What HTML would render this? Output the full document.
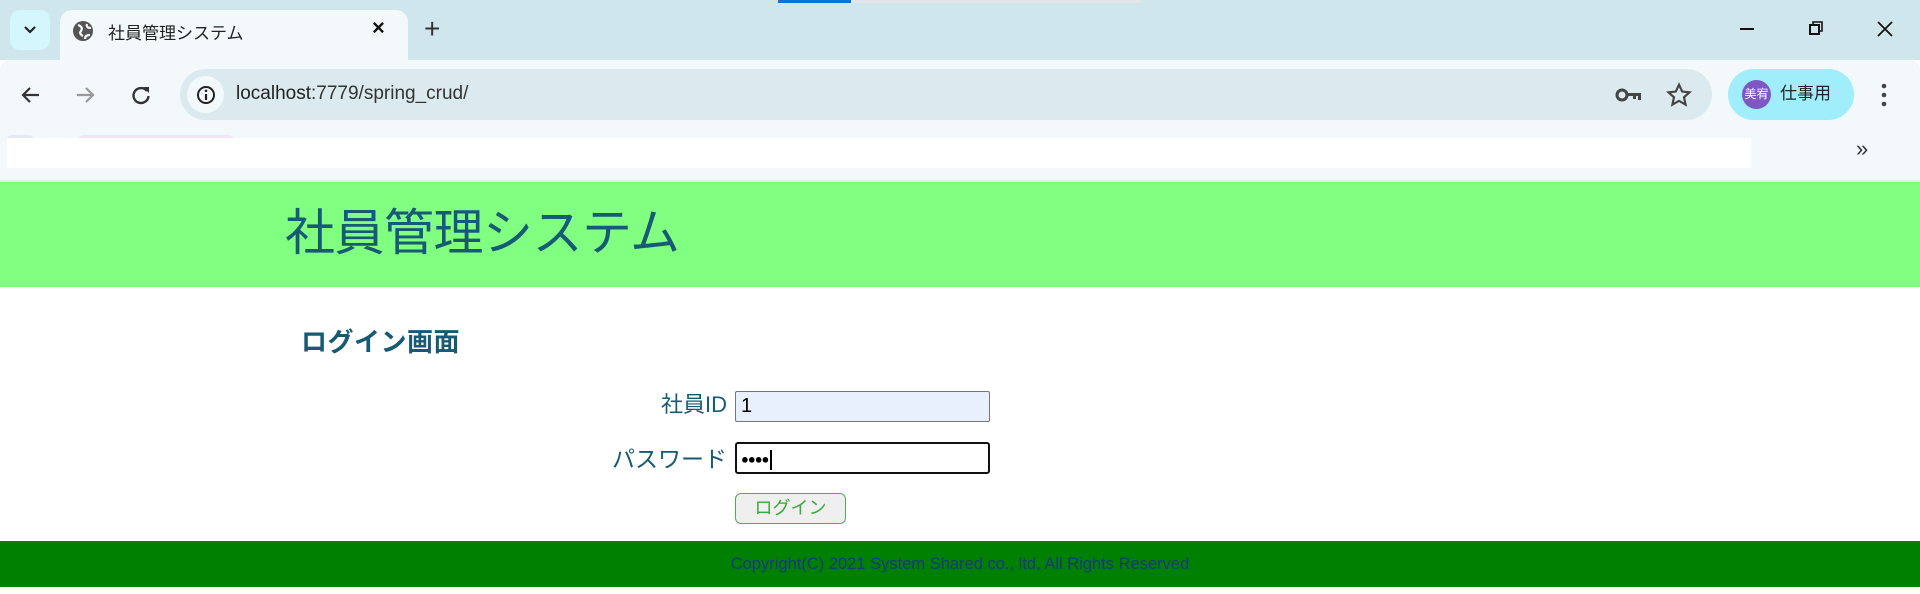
<!DOCTYPE html>
<html><head><meta charset="utf-8"><style>
*{margin:0;padding:0;box-sizing:border-box}
body{width:1920px;height:594px;overflow:hidden;background:#fff;font-family:"Liberation Sans","Noto Sans CJK JP",sans-serif;position:relative}
.abs{position:absolute}
</style></head><body>
<div class="abs" style="left:0;top:0;width:1920px;height:60px;background:#cfe7ec"></div>
<div class="abs" style="left:778px;top:0;width:73px;height:3px;background:#0b73d8"></div>
<div class="abs" style="left:851px;top:0;width:290px;height:3px;background:#e2e6ea"></div>
<div class="abs" style="left:10px;top:10px;width:40px;height:40px;border-radius:10px;background:#d4f6fd"></div>
<svg class="abs" style="left:23px;top:24px" width="14" height="12"><path d="M2 3l5 5 5-5" stroke="#222" stroke-width="2.2" fill="none"/></svg>
<div class="abs" style="left:60px;top:10px;width:348px;height:52px;background:#f3f8fb;border-radius:12px 12px 0 0"></div>
<svg class="abs" style="left:72px;top:20px" width="22" height="22" viewBox="0 0 22 22"><circle cx="11" cy="11" r="10" fill="#555"/><path d="M6 5c3 1 5 3 3 6-2 2 0 4 2 5M15 4c-1 3 1 4 4 4M13 19c0-3 2-4 5-4" stroke="#f3f8fb" stroke-width="2.2" fill="none"/></svg>
<div class="abs" style="left:108px;top:19px;font-size:17px;color:#222">社員管理システム</div>
<div class="abs" style="left:372px;top:15px;font-size:22px;color:#111;font-weight:bold">×</div>
<div class="abs" style="left:424px;top:13px;font-size:28px;color:#333">+</div>
<div class="abs" style="left:1740px;top:28px;width:14px;height:2px;background:#111"></div>
<svg class="abs" style="left:1808px;top:20px" width="16" height="16"><rect x="2" y="5" width="9" height="9" fill="none" stroke="#111" stroke-width="2"/><path d="M5 5V2h9v9h-3" fill="none" stroke="#111" stroke-width="1.6"/></svg>
<svg class="abs" style="left:1876px;top:20px" width="18" height="18"><path d="M2 2l14 14M16 2L2 16" stroke="#111" stroke-width="1.8"/></svg>

<div class="abs" style="left:0;top:60px;width:1920px;height:122px;background:#f3f8fb;border-radius:10px 10px 0 0"></div>
<svg class="abs" style="left:20px;top:84px" width="22" height="22"><path d="M19 11H4M10 4l-7 7 7 7" stroke="#333" stroke-width="2.2" fill="none"/></svg>
<svg class="abs" style="left:74px;top:84px" width="22" height="22"><path d="M3 11h15M12 4l7 7-7 7" stroke="#999" stroke-width="2.2" fill="none"/></svg>
<svg class="abs" style="left:130px;top:84px" width="22" height="22"><path d="M17 7A7.5 7.5 0 1 0 18.5 12" stroke="#333" stroke-width="2.4" fill="none"/><path d="M13 3h6v6z" fill="#333"/></svg>
<div class="abs" style="left:180px;top:69px;width:1532px;height:51px;border-radius:26px;background:#dbeaee"></div>
<div class="abs" style="left:187px;top:76px;width:37px;height:37px;border-radius:50%;background:#f3f8fb"></div>
<svg class="abs" style="left:195px;top:84px" width="22" height="22"><circle cx="11" cy="11" r="8" fill="none" stroke="#222" stroke-width="2"/><path d="M11 10v6" stroke="#222" stroke-width="2.2"/><circle cx="11" cy="6.8" r="1.3" fill="#222"/></svg>
<div class="abs" style="left:236px;top:83px;font-size:19px;color:#222">localhost<span style="color:#333">:7779/spring_crud/</span></div>
<svg class="abs" style="left:1615px;top:85px" width="28" height="20"><circle cx="7" cy="10" r="5" fill="none" stroke="#444" stroke-width="3"/><path d="M12 8h14v7h-3v-4h-2v3h-3v-3h-6z" fill="#444"/></svg>
<svg class="abs" style="left:1666px;top:82px" width="26" height="26" viewBox="0 0 24 24"><path d="M12 2.5l2.9 6.3 6.8.7-5.1 4.6 1.5 6.8L12 17.4l-6.1 3.5 1.5-6.8-5.1-4.6 6.8-.7z" fill="none" stroke="#444" stroke-width="2"/></svg>
<div class="abs" style="left:1728px;top:69px;width:126px;height:51px;border-radius:26px;background:#a0edfc"></div>
<div class="abs" style="left:1742px;top:80px;width:29px;height:29px;border-radius:50%;background:#7e57c2;color:#fff;font-size:12px;line-height:29px;text-align:center">美宥</div>
<div class="abs" style="left:1780px;top:82px;font-size:17px;line-height:24px;color:#222">仕事用</div>
<svg class="abs" style="left:1880px;top:82px" width="8" height="26"><circle cx="4" cy="4" r="2.3" fill="#444"/><circle cx="4" cy="13" r="2.3" fill="#444"/><circle cx="4" cy="22" r="2.3" fill="#444"/></svg>
<div class="abs" style="left:7px;top:135px;width:27px;height:5px;border-radius:6px 6px 0 0;background:#e4e8f7"></div>
<div class="abs" style="left:78px;top:135px;width:156px;height:5px;border-radius:6px 6px 0 0;background:#f1e4f8"></div>
<div class="abs" style="left:7px;top:138px;width:1744px;height:30px;background:#fff"></div>
<div class="abs" style="left:1856px;top:136px;font-size:22px;color:#333">»</div>
<div class="abs" style="left:0;top:180px;width:1920px;height:2px;background:#e6eef0"></div>

<div class="abs" style="left:0;top:182px;width:1920px;height:105px;background:#80ff80"></div>
<div class="abs" style="left:285px;top:201px;font-size:50px;color:#165a74;line-height:64px;letter-spacing:-0.5px">社員管理システム</div>
<div class="abs" style="left:301px;top:322px;font-size:26px;font-weight:bold;color:#165a74;letter-spacing:0.5px">ログイン画面</div>
<div class="abs" style="left:500px;top:387px;width:227px;text-align:right;font-size:22px;color:#165a74">社員ID</div>
<div class="abs" style="left:735px;top:391px;width:255px;height:31px;background:#e8f0fe;border:1px solid #767676;border-radius:2px;font-size:20px;padding:3px 5px;color:#000">1</div>
<div class="abs" style="left:500px;top:440px;width:227px;text-align:right;font-size:23px;color:#165a74">パスワード</div>
<div class="abs" style="left:735px;top:442px;width:255px;height:32px;border:2px solid #111;border-radius:3px;font-size:13px;padding:6px 4px;color:#000;letter-spacing:-1px">●●●●<span style="display:inline-block;width:2px;height:20px;background:#000;vertical-align:middle;margin-left:2px"></span></div>
<div class="abs" style="left:735px;top:493px;width:111px;height:31px;border:1px solid #4cb04c;border-radius:6px;background:#efefef;color:#3aa83a;font-size:18px;text-align:center;line-height:29px">ログイン</div>
<div class="abs" style="left:0;top:541px;width:1920px;height:46px;background:#008000;color:#1a3680;font-size:16.5px;text-align:center;line-height:46px">Copyright(C) 2021 System Shared co., ltd, All Rights Reserved</div>
</body></html>
